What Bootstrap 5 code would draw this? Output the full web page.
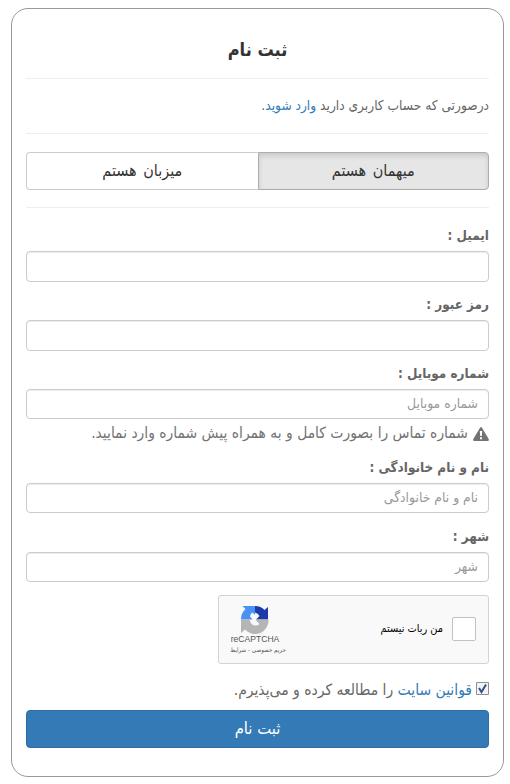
<!DOCTYPE html>
<html lang="fa" dir="rtl">
<head>
<meta charset="utf-8">
<meta name="viewport" content="width=device-width, initial-scale=1">
<title>ثبت نام</title>
<link href="https://cdn.jsdelivr.net/npm/bootstrap@5.3.0/dist/css/bootstrap.min.css" rel="stylesheet">
<style>
body{font-family:"DejaVu Sans Condensed","DejaVu Sans",sans-serif;font-size:14px;color:#666;background:#fff;overflow:hidden}
a{color:#337ab7;text-decoration:none}
.panel-box{width:493px;height:769px;margin:8px 6px 0 auto;border:1px solid #999;border-radius:17px;padding:0 14px}
.fit{display:inline-block;white-space:nowrap}
.rule{height:1px;background:#eee}
.title{height:69px;padding-top:11px;font-size:18px;font-weight:700;color:#333}
.intro{height:54px;padding-bottom:2px;font-size:13.6px}
.choice{height:38px;margin:18px 0 17px}
.choice .btn{border:1px solid #ccc;color:#333;font-size:16px;line-height:32px;padding:1px 0 2px;border-radius:0;word-spacing:2px}
.choice .btn:first-child{background:#e6e6e6;border-color:#adadad;box-shadow:inset 0 3px 5px rgba(0,0,0,.125);border-radius:0 4px 4px 0}
.choice .btn:last-child{border-radius:4px 0 0 4px;border-right:0}
.field-label{display:block;height:28px;line-height:25px;font-weight:700;font-size:13.4px;margin-top:10px}
.field-label.first{margin-top:15px;line-height:26px}
.field-label.last{margin-top:11px}
.form-control{height:30px;border:1px solid #ccc;border-radius:4px;padding:0 10px 3px;font-size:13.8px;line-height:26px;box-shadow:inset 0 1px 1px rgba(0,0,0,.075);text-align:right}
.form-control.tall{height:31px}
.form-control::placeholder{color:#999}
.help{height:30px;margin-bottom:-4px;font-size:15.45px;color:#737373;gap:5px}
.captcha{width:271px;height:69px;margin-top:13px;background:#f9f9f9;border:1px solid #d3d3d3;border-radius:3px;color:#000}
.tick{width:24px;height:24px;border:1px solid #c1c1c1;border-radius:2px;background:#fff;margin-right:12px;margin-top:-2px}
.robot{font-size:10.9px;margin-right:9px}
.brand{width:66px;margin-right:auto;margin-left:6px;padding-top:9px;color:#555}
.brand svg{margin-right:0;margin-left:0;transform:translateX(-3px)}
.brand-name{font:8.6px/11px "Liberation Sans",sans-serif;margin-right:0;transform:translateX(-3px)}
.brand-links{font-size:6.2px;line-height:9px}
.terms{height:46px;padding-top:7px;font-size:15.5px;gap:4px}
.terms svg{margin-top:-5px}
.submit{height:38px;background:#337ab7;border:1px solid #2e6da4;border-radius:4px;color:#fff;padding:1px 0 2px;font-size:16.5px;line-height:32px}
</style>
<script src="https://cdn.jsdelivr.net/npm/bootstrap@5.3.0/dist/js/bootstrap.bundle.min.js"></script>
</head>
<body>
<form class="panel-box">
  <div class="title d-flex align-items-center justify-content-center"><span class="fit">ثبت نام</span></div>
  <div class="rule"></div>
  <div class="intro d-flex align-items-center"><span class="fit">درصورتی که حساب کاربری دارید <a href="#">وارد شوید</a>.</span></div>
  <div class="rule"></div>
  <div class="choice d-flex">
    <button type="button" class="btn w-50"><span class="fit">میهمان هستم</span></button>
    <button type="button" class="btn w-50"><span class="fit">میزبان هستم</span></button>
  </div>
  <div class="rule"></div>
  <label class="field-label first" for="email"><span class="fit">ایمیل :</span></label>
  <input id="email" class="form-control tall">
  <label class="field-label" for="pass"><span class="fit">رمز عبور :</span></label>
  <input id="pass" type="password" class="form-control tall">
  <label class="field-label" for="mobile"><span class="fit">شماره موبایل :</span></label>
  <input id="mobile" class="form-control" placeholder="شماره موبایل">
  <div class="help d-flex align-items-center">
    <svg width="16" height="14" viewBox="0 0 16 14"><path d="M7 .8Q8-.6 9 .8l6.700 11.300Q16.200 14 14.800 14H1.200Q-.2 14 .3 12.100z" fill="#737373"/><path d="M6.800 4h2.400L8.800 9H7.200zM7 10.300h2v2H7z" fill="#fff"/></svg>
    <span class="fit">شماره تماس را بصورت کامل و به همراه پیش شماره وارد نمایید.</span>
  </div>
  <label class="field-label" for="fullname"><span class="fit">نام و نام خانوادگی :</span></label>
  <input id="fullname" class="form-control" placeholder="نام و نام خانوادگی">
  <label class="field-label last" for="city"><span class="fit">شهر :</span></label>
  <input id="city" class="form-control" placeholder="شهر">
  <div class="captcha d-flex align-items-center">
    <span class="tick"></span><span class="robot fit">من ربات نیستم</span>
    <div class="brand d-flex flex-column align-items-center align-self-start">
      <svg width="28" height="29" viewBox="0 0 28 29"><path d="M0 14.500A14 14 0 0 1 4.500 4L1.500 1H14v9l-2.500-2.500Q9 9 9 11.500L11.500 14.500z" fill="#4a90f5"/><path d="M14 1q6 0 9.500 4L27 2v12.500H15l3.500-3.500Q17 8 14 7.500z" fill="#1c3aa9"/><path d="M0 14.500h8.500Q9 18 12 20q4 1.500 6.500-1L15 15.500l1.500-1H27.500A13.500 13.500 0 0 1 4 24.500L0 28z" fill="#b5b5b5"/></svg>
      <span class="brand-name">reCAPTCHA</span><span class="brand-links fit">حریم خصوصی - شرایط</span>
    </div>
  </div>
  <div class="terms d-flex align-items-center"><svg width="13" height="13" viewBox="0 0 13 13"><path d="M.5.5h12v12H.5z" fill="#f1f3f5" stroke="#8e8f8f"/><path d="M3 6l2.500 4L10 2.500" fill="none" stroke="#37508f" stroke-width="2"/></svg><span class="fit"><a href="#">قوانین سایت</a> را مطالعه کرده و می‌پذیرم.</span></div>
  <button type="button" class="submit btn w-100 d-block"><span class="fit">ثبت نام</span></button>
</form>
</body>
</html>
